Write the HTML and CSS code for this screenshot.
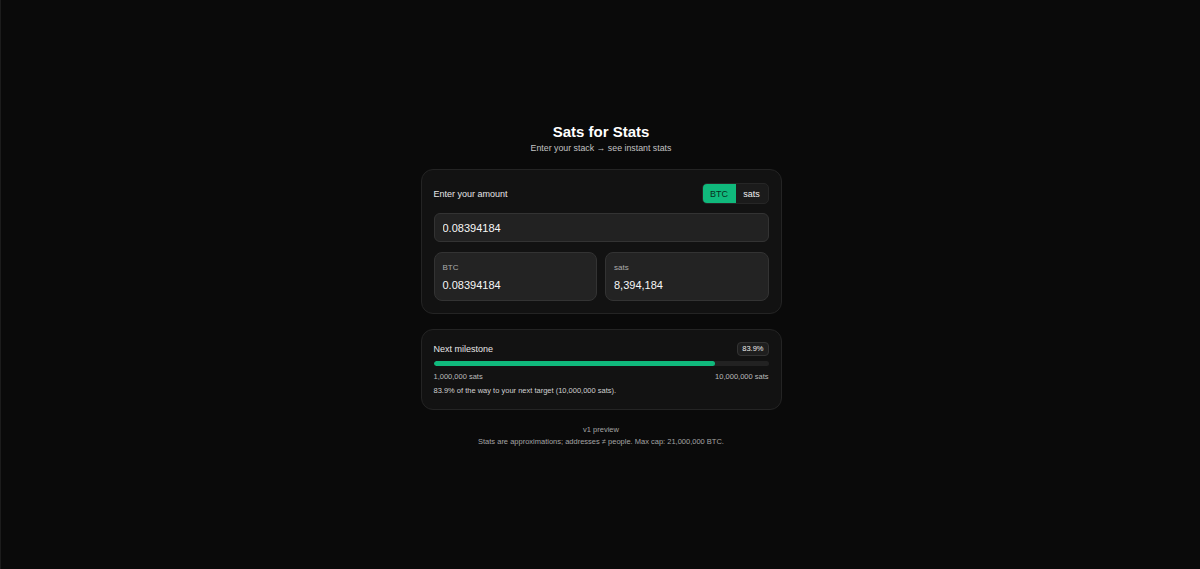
FILE: index.html
```html
<!DOCTYPE html>
<html lang="en">
<head>
    <meta charset="UTF-8">
    <meta name="viewport" content="width=device-width, initial-scale=1.0">
    <title>Sats for Stats</title>
    <link rel="stylesheet" href="styles.css">
</head>
<body>
    <main class="app">
        <header class="app-header">
            <h1>Sats for Stats</h1>
            <p class="tagline">Enter your stack → see instant stats</p>
        </header>

        <!-- amount entry -->
        <section class="card">
            <div class="card-row">
                <span class="card-label">Enter your amount</span>
                <div class="unit-toggle">
                    <button class="unit active">BTC</button>
                    <button class="unit">sats</button>
                </div>
            </div>
            <input class="amount-input" type="text" value="0.08394184">
            <div class="conversions">
                <div class="conv-box">
                    <span class="conv-label">BTC</span>
                    <span class="conv-value">0.08394184</span>
                </div>
                <div class="conv-box">
                    <span class="conv-label">sats</span>
                    <span class="conv-value">8,394,184</span>
                </div>
            </div>
        </section>

        <!-- milestone progress -->
        <section class="card milestone">
            <div class="card-row">
                <span class="card-label">Next milestone</span>
                <span class="badge">83.9%</span>
            </div>
            <div class="progress">
                <div class="progress-fill" style="width: 83.9%"></div>
            </div>
            <div class="progress-ends">
                <span>1,000,000 sats</span>
                <span>10,000,000 sats</span>
            </div>
            <p class="milestone-note">83.9% of the way to your next target (10,000,000 sats).</p>
        </section>

        <footer class="app-footer">
            <p>v1 preview</p>
            <p>Stats are approximations; addresses ≠ people. Max cap: 21,000,000 BTC.</p>
        </footer>
    </main>
</body>
</html>
```

FILE: styles.css
```css
* {
    margin: 0;
    padding: 0;
    box-sizing: border-box;
}

body {
    min-height: 100vh;
    padding: 123px 0 0 1px;
    background: #0a0a0a;
    color: #e5e5e5;
    font-family: 'Liberation Sans', Arial, sans-serif;
    border-left: 1px solid #1c1c1c;
}

.app {
    width: 361px;
    margin: 0 auto;
    display: flex;
    flex-direction: column;
    gap: 15px;
}

.app-header {
    text-align: center;
}

.app-header h1 {
    font-size: 15px;
    font-weight: bold;
    color: #fff;
    line-height: 18px;
}

.tagline {
    font-size: 8.8px;
    line-height: 11px;
    color: #c2c2c2;
    margin-top: 2px;
}

.card {
    background: #121212;
    border: 1px solid #242424;
    border-radius: 12px;
    padding: 13px 12px 12px;
}

.card-row {
    display: flex;
    justify-content: space-between;
    align-items: center;
}

.card-label {
    font-size: 9px;
    color: #e6e6e6;
}

.unit-toggle {
    display: flex;
    background: #1b1b1b;
    border: 1px solid #262626;
    border-radius: 5px;
    overflow: hidden;
}

.unit {
    font-family: inherit;
    font-size: 9px;
    color: #f2f2f2;
    background: transparent;
    border: none;
    height: 19px;
    width: 32px;
}

.unit.active {
    background: #10b97c;
    color: #08301e;
    width: 33px;
}

.amount-input {
    display: block;
    width: 100%;
    margin-top: 9px;
    height: 29px;
    padding: 0 8px;
    background: #222;
    border: 1px solid #333;
    border-radius: 6px;
    color: #f7f7f7;
    font-family: inherit;
    font-size: 11px;
    outline: none;
}

.conversions {
    display: grid;
    grid-template-columns: 1fr 1fr;
    gap: 8px;
    margin-top: 10px;
}

.conv-box {
    display: flex;
    flex-direction: column;
    gap: 5px;
    height: 49px;
    padding: 10px 8px 0;
    background: #232323;
    border: 1px solid #333;
    border-radius: 8px;
}

.conv-label {
    font-size: 8px;
    line-height: 10px;
    color: #ababab;
}

.conv-value {
    font-size: 11px;
    line-height: 14px;
    color: #f7f7f7;
}

.milestone {
    padding: 12px 12px 13px;
}

.badge {
    font-size: 7.5px;
    line-height: 10px;
    color: #ececec;
    background: #1e1e1e;
    border: 1px solid #333;
    border-radius: 4px;
    padding: 1px 4px;
}

.progress {
    margin-top: 5px;
    height: 5px;
    background: #222;
    border-radius: 3px;
    overflow: hidden;
}

.progress-fill {
    height: 100%;
    background: #10b97c;
    border-radius: 3px;
}

.progress-ends {
    display: flex;
    justify-content: space-between;
    margin-top: 6px;
    font-size: 7.5px;
    line-height: 10px;
    color: #bcbcbc;
}

.milestone-note {
    margin-top: 4px;
    font-size: 7.5px;
    line-height: 10px;
    color: #d0d0d0;
}

.app-footer {
    text-align: center;
    font-size: 7.5px;
    color: #a4a4a4;
    line-height: 12px;
    margin-top: -1px;
}
```
